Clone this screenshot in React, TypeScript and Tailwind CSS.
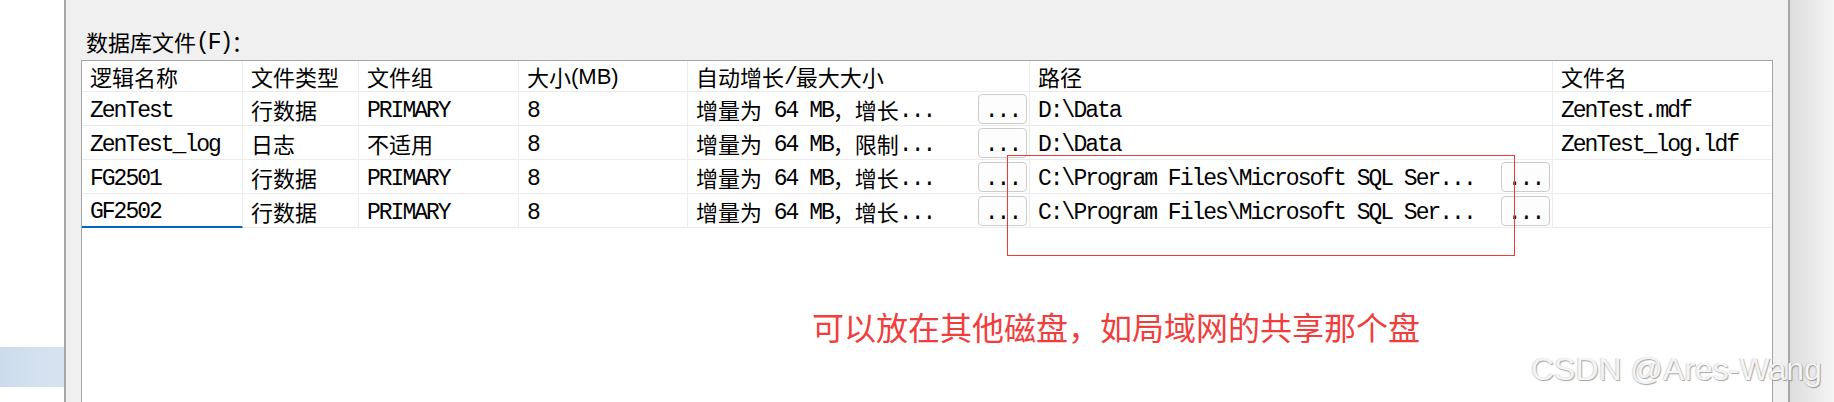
const CJK = /([\u3000-\u303f\u3400-\u9fff\uff00-\uffef]+)/

// SimSun-like mix: CJK runs in Noto Sans CJK, latin runs in a narrow mono
function T({ s }: { s: string }) {
  const parts = s.split(CJK).filter(Boolean)
  return (
    <>
      {parts.map((p, i) =>
        CJK.test(p) ? (
          <span key={i} className="font-['Noto_Sans_CJK_SC',sans-serif] text-[22px]">
            {p}
          </span>
        ) : (
          <span
            key={i}
            className="relative top-[2px] whitespace-pre font-['Liberation_Mono','Noto_Sans_CJK_SC',monospace] text-[23px] tracking-[-2px]"
          >
            {p}
          </span>
        )
      )}
    </>
  )
}

const colW = ['w-[161px]', 'w-[116px]', 'w-[160px]', 'w-[169px]', 'w-[342px]', 'w-[523px]', 'w-[219px]']

type Row = {
  name: string
  type: string
  group: string
  size: string
  grow: string
  path: string
  pathBtn?: boolean
  file: string
  editing?: boolean
}

const rows: Row[] = [
  { name: 'ZenTest', type: '行数据', group: 'PRIMARY', size: '8', grow: '增量为 64 MB，增长...', path: 'D:\\Data', file: 'ZenTest.mdf' },
  { name: 'ZenTest_log', type: '日志', group: '不适用', size: '8', grow: '增量为 64 MB，限制...', path: 'D:\\Data', file: 'ZenTest_log.ldf' },
  { name: 'FG2501', type: '行数据', group: 'PRIMARY', size: '8', grow: '增量为 64 MB，增长...', path: 'C:\\Program Files\\Microsoft SQL Ser...', pathBtn: true, file: '' },
  { name: 'GF2502', type: '行数据', group: 'PRIMARY', size: '8', grow: '增量为 64 MB，增长...', path: 'C:\\Program Files\\Microsoft SQL Ser...', pathBtn: true, file: '', editing: true },
]

function DotsButton() {
  return (
    <div className="flex h-[30px] w-[49px] shrink-0 items-center justify-center rounded-[4px] border border-[#cccccc] bg-[#fdfdfd] leading-[22px] text-black">
      <T s="..." />
    </div>
  )
}

function Cell({ i, children, className = '' }: { i: number; children?: React.ReactNode; className?: string }) {
  return (
    <div
      className={`flex h-full shrink-0 items-center whitespace-nowrap pl-[8px] leading-[24px] text-black ${colW[i]} ${
        i < 6 ? 'border-r border-[#ededed]' : ''
      } ${className}`}
    >
      {children}
    </div>
  )
}

export default function App() {
  return (
    <div className="relative flex h-[402px] w-[1834px] overflow-hidden bg-white">
      {/* left tree pane */}
      <div className="flex w-[64px] shrink-0 flex-col bg-white">
        <div className="h-[347px]" />
        <div className="h-[40px] bg-linear-to-r from-[#cddcec] to-[#d6e4f2]" />
      </div>
      <div className="w-[2px] shrink-0 bg-[#a8a8a8]" />

      {/* dialog page */}
      <div className="flex w-[1722px] shrink-0 flex-col bg-[#f0f0f0] px-[15px] pt-[30px]">
        <div className="flex h-[22px] items-center pl-[5px] leading-[22px] text-black">
          <T s="数据库文件(F)：" />
        </div>

        <div className="mt-[8px] flex flex-1 flex-col border-l border-r border-t border-[#a5a5a5] bg-white">
          <div className="flex h-[31px] shrink-0 border-b border-[#ebebeb]">
            <Cell i={0}><T s="逻辑名称" /></Cell>
            <Cell i={1}><T s="文件类型" /></Cell>
            <Cell i={2}><T s="文件组" /></Cell>
            <Cell i={3}>
              <T s="大小" />
              <span className="relative top-[1px] font-['Liberation_Sans',sans-serif] text-[22px]">(MB)</span>
            </Cell>
            <Cell i={4}><T s="自动增长/最大大小" /></Cell>
            <Cell i={5}><T s="路径" /></Cell>
            <Cell i={6}><T s="文件名" /></Cell>
          </div>

          {rows.map((r) => (
            <div key={r.name} className="flex h-[34px] shrink-0">
              <Cell
                i={0}
                className={r.editing ? 'border-b-2 border-b-[#0067c0] pl-[7px]' : 'border-b border-b-[#ebebeb]'}
              >
                <T s={r.name} />
              </Cell>
              <Cell i={1} className="border-b border-b-[#ebebeb]"><T s={r.type} /></Cell>
              <Cell i={2} className="border-b border-b-[#ebebeb]"><T s={r.group} /></Cell>
              <Cell i={3} className="border-b border-b-[#ebebeb]"><T s={r.size} /></Cell>
              <Cell i={4} className="justify-between border-b border-b-[#ebebeb] pr-[2px]">
                <span className="flex items-center"><T s={r.grow} /></span>
                <DotsButton />
              </Cell>
              <Cell i={5} className="justify-between border-b border-b-[#ebebeb] pr-[2px]">
                <span className="flex items-center"><T s={r.path} /></span>
                {r.pathBtn && <DotsButton />}
              </Cell>
              <Cell i={6} className="border-b border-b-[#ebebeb]"><T s={r.file} /></Cell>
            </div>
          ))}

          <div className="flex-1" />
        </div>
      </div>

      <div className="w-[2px] shrink-0 bg-[#a9a9a9]" />
      <div className="flex-1 bg-linear-to-r from-[#dddddd] to-[#f5f5f5]" />

      {/* annotations drawn over the screenshot */}
      <div className="absolute left-[1007px] top-[155px] h-[101px] w-[508px] border border-[#ec3a3a]" />
      <div className="absolute left-[812px] top-[310px] whitespace-nowrap font-['Noto_Sans_CJK_SC',sans-serif] text-[32px] leading-[32px] text-[#f23d3d]">
        可以放在其他磁盘，如局域网的共享那个盘
      </div>
      <div className="absolute left-[1531px] top-[353px] whitespace-nowrap font-['Liberation_Sans',sans-serif] text-[32px] leading-[32px] text-[#f4f4f4] [text-shadow:1px_1px_1px_rgba(0,0,0,0.35),-1px_0_1px_rgba(0,0,0,0.15)]">
        CSDN @Ares-Wang
      </div>
    </div>
  )
}
